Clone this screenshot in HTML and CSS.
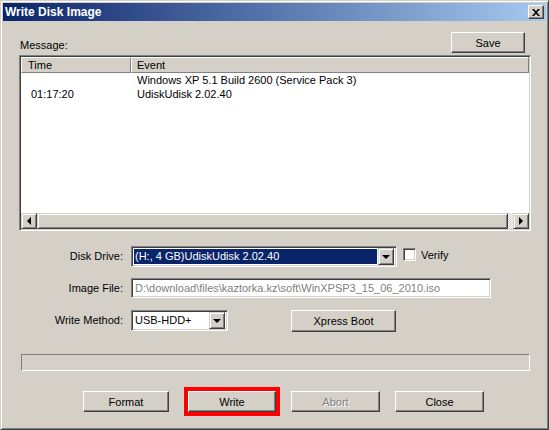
FILE: index.html
```html
<!DOCTYPE html>
<html lang="en">
<head>
    <meta charset="UTF-8">
    <meta name="viewport" content="width=device-width, initial-scale=1.0">
    <title>Write Disk Image</title>
    <link rel="stylesheet" href="styles.css">
</head>
<body>
    <div class="window">
        <div class="titlebar">
            <span class="title">Write Disk Image</span>
            <button class="close-btn" type="button" aria-label="Close">
                <svg width="8" height="7" viewBox="0 0 8 7">
                    <path d="M0 0h2l2 2.2L6 0h2L5 3.5 8 7H6L4 4.8 2 7H0l3-3.5z" fill="#000"/>
                </svg>
            </button>
        </div>

        <div class="content">
            <div class="message-bar">
                <span class="label">Message:</span>
                <button class="btn btn-save" type="button">Save</button>
            </div>

            <div class="listview">
                <div class="list-header">
                    <div class="col col-time">Time</div>
                    <div class="col col-event">Event</div>
                </div>
                <div class="list-body">
                    <div class="row">
                        <span class="cell-time"></span>
                        <span class="cell-event">Windows XP 5.1 Build 2600 (Service Pack 3)</span>
                    </div>
                    <div class="row">
                        <span class="cell-time">01:17:20</span>
                        <span class="cell-event">UdiskUdisk 2.02.40</span>
                    </div>
                </div>
                <div class="hscroll">
                    <span class="sb-btn"><i class="arrow-left"></i></span>
                    <span class="sb-thumb"></span>
                    <span class="sb-track"></span>
                    <span class="sb-btn"><i class="arrow-right"></i></span>
                </div>
            </div>

            <div class="form">
                <span class="form-label">Disk Drive:</span>
                <div class="form-field">
                    <div class="combo combo-drive">
                        <span class="combo-value selected">(H:, 4 GB)UdiskUdisk 2.02.40</span>
                        <span class="combo-btn"><i class="arrow-down"></i></span>
                    </div>
                    <label class="check"><span class="check-box"></span>Verify</label>
                </div>

                <span class="form-label">Image File:</span>
                <div class="form-field">
                    <div class="textbox disabled">D:\download\files\kaztorka.kz\soft\WinXPSP3_15_06_2010.iso</div>
                </div>

                <span class="form-label">Write Method:</span>
                <div class="form-field">
                    <div class="combo combo-method">
                        <span class="combo-value">USB-HDD+</span>
                        <span class="combo-btn"><i class="arrow-down"></i></span>
                    </div>
                    <button class="btn btn-xpress" type="button">Xpress Boot</button>
                </div>
            </div>

            <div class="progress"></div>

            <div class="actions">
                <button class="btn btn-format" type="button">Format</button>
                <button class="btn btn-write" type="button">Write</button>
                <button class="btn btn-abort" type="button" disabled>Abort</button>
                <button class="btn btn-close" type="button">Close</button>
            </div>
        </div>
    </div>
</body>
</html>
```

FILE: styles.css
```css
* {
    margin: 0;
    padding: 0;
    box-sizing: border-box;
}

body {
    width: 549px;
    height: 430px;
    font-family: "Liberation Sans", Arial, sans-serif;
    font-size: 11px;
    color: #000;
    background: #d4d0c8;
    overflow: hidden;
}

/* classic 3D window frame */
.window {
    width: 549px;
    height: 430px;
    background: #d4d0c8;
    border-top: 1px solid #d4d0c8;
    border-left: 1px solid #d4d0c8;
    border-right: 1px solid #404040;
    border-bottom: 1px solid #404040;
    box-shadow: inset 1px 1px #fff, inset -1px -1px #808080;
    padding: 2px;
    display: flex;
    flex-direction: column;
}

.titlebar {
    height: 18px;
    display: flex;
    align-items: center;
    justify-content: space-between;
    padding: 0 2px 0 2px;
    background: linear-gradient(to right, #0a246a, #a6caf0);
}

.title {
    color: #fff;
    font-weight: bold;
    font-size: 12px;
}

.close-btn {
    width: 16px;
    height: 14px;
    display: flex;
    align-items: center;
    justify-content: center;
    background: #d4d0c8;
    border-top: 1px solid #fff;
    border-left: 1px solid #fff;
    border-right: 1px solid #404040;
    border-bottom: 1px solid #404040;
    box-shadow: inset -1px -1px #808080;
}

.content {
    flex: 1;
    padding: 11px 15px 0 16px;
    display: flex;
    flex-direction: column;
}

/* raised push button */
.btn {
    height: 21px;
    font-family: inherit;
    font-size: 11px;
    color: #000;
    background: #d4d0c8;
    border-top: 1px solid #fff;
    border-left: 1px solid #fff;
    border-right: 1px solid #404040;
    border-bottom: 1px solid #404040;
    box-shadow: inset -1px -1px #808080;
}

.btn:disabled {
    color: #808080;
    text-shadow: 1px 1px #fff;
}

.message-bar {
    display: flex;
    justify-content: space-between;
    align-items: flex-end;
    padding-left: 1px;
    padding-right: 6px;
}

.label {
    padding-bottom: 2px;
}

.btn-save {
    width: 74px;
}

/* list with sunken frame */
.listview {
    margin-top: 2px;
    height: 176px;
    background: #fff;
    border-top: 1px solid #808080;
    border-left: 1px solid #808080;
    border-right: 1px solid #fff;
    border-bottom: 1px solid #fff;
    box-shadow: inset 1px 1px #404040, inset -1px -1px #d4d0c8;
    padding: 1px;
    display: flex;
    flex-direction: column;
}

.list-header {
    display: flex;
    height: 16px;
    background: #d4d0c8;
}

.list-header .col {
    height: 16px;
    line-height: 14px;
    border-top: 1px solid #fff;
    border-left: 1px solid #fff;
    border-right: 1px solid #808080;
    border-bottom: 1px solid #808080;
}

.col-time {
    width: 110px;
    padding-left: 6px;
}

.col-event {
    flex: 1;
    padding-left: 5px;
}

.list-body {
    flex: 1;
}

.row {
    display: flex;
    height: 14px;
    line-height: 14px;
}

.cell-time {
    width: 116px;
    padding-left: 10px;
}

/* horizontal scrollbar */
.hscroll {
    display: flex;
    height: 16px;
    background: #d4d0c8;
}

.sb-btn,
.sb-thumb {
    height: 16px;
    background: #d4d0c8;
    border-top: 1px solid #d4d0c8;
    border-left: 1px solid #d4d0c8;
    border-right: 1px solid #404040;
    border-bottom: 1px solid #404040;
    box-shadow: inset 1px 1px #fff, inset -1px -1px #808080;
}

.sb-btn {
    width: 16px;
    display: flex;
    align-items: center;
    justify-content: center;
}

.sb-thumb {
    flex: 1;
}

.sb-track {
    width: 5px;
    background: repeating-conic-gradient(#fff 0 25%, #d4d0c8 0 50%) 0 0 / 2px 2px;
}

.arrow-left {
    border-top: 4px solid transparent;
    border-bottom: 4px solid transparent;
    border-right: 4px solid #000;
}

.arrow-right {
    border-top: 4px solid transparent;
    border-bottom: 4px solid transparent;
    border-left: 4px solid #000;
}

.arrow-down {
    border-left: 4px solid transparent;
    border-right: 4px solid transparent;
    border-top: 4px solid #000;
}

/* option rows */
.form {
    margin-top: 15px;
    display: grid;
    grid-template-columns: 104px 1fr;
    grid-auto-rows: 21px;
    column-gap: 8px;
    row-gap: 11px;
}

.form-label {
    text-align: right;
    line-height: 20px;
}

.form-field {
    display: flex;
    align-items: flex-start;
}

.combo,
.textbox {
    background: #fff;
    border-top: 1px solid #808080;
    border-left: 1px solid #808080;
    border-right: 1px solid #fff;
    border-bottom: 1px solid #fff;
    box-shadow: inset 1px 1px #404040, inset -1px -1px #d4d0c8;
    padding: 2px;
}

.combo {
    height: 21px;
    display: flex;
}

.combo-value {
    flex: 1;
    line-height: 15px;
    padding-left: 1px;
}

.combo-value.selected {
    background: #0a246a;
    color: #fff;
    margin-right: 1px;
}

.combo-btn {
    width: 16px;
    height: 17px;
    margin-top: -1px;
    display: flex;
    align-items: center;
    justify-content: center;
    background: #d4d0c8;
    border-top: 1px solid #d4d0c8;
    border-left: 1px solid #d4d0c8;
    border-right: 1px solid #404040;
    border-bottom: 1px solid #404040;
    box-shadow: inset 1px 1px #fff, inset -1px -1px #808080;
}

.combo-drive {
    width: 266px;
}

.combo-method {
    width: 97px;
}

.check {
    display: flex;
    align-items: center;
    gap: 5px;
    margin-left: 6px;
    margin-top: 2px;
}

.check-box {
    width: 13px;
    height: 13px;
    background: #fff;
    border-top: 1px solid #808080;
    border-left: 1px solid #808080;
    border-right: 1px solid #fff;
    border-bottom: 1px solid #fff;
    box-shadow: inset 1px 1px #404040, inset -1px -1px #d4d0c8;
}

.textbox {
    width: 360px;
    height: 20px;
    line-height: 15px;
    padding-left: 3px;
}

.textbox.disabled {
    color: #808080;
}

.btn-xpress {
    width: 105px;
    height: 22px;
    margin-left: 63px;
}

.progress {
    margin: 23px 0 0 2px;
    width: 509px;
    height: 17px;
    border-top: 1px solid #808080;
    border-left: 1px solid #808080;
    border-right: 1px solid #fff;
    border-bottom: 1px solid #fff;
}

.actions {
    display: flex;
    margin-top: 20px;
    padding-left: 64px;
}

.btn-format {
    width: 86px;
}

.btn-write {
    width: 88px;
    margin-left: 19px;
    outline: 4px solid #f00;
}

.btn-abort {
    width: 89px;
    margin-left: 15px;
}

.btn-close {
    width: 89px;
    margin-left: 15px;
}
```
